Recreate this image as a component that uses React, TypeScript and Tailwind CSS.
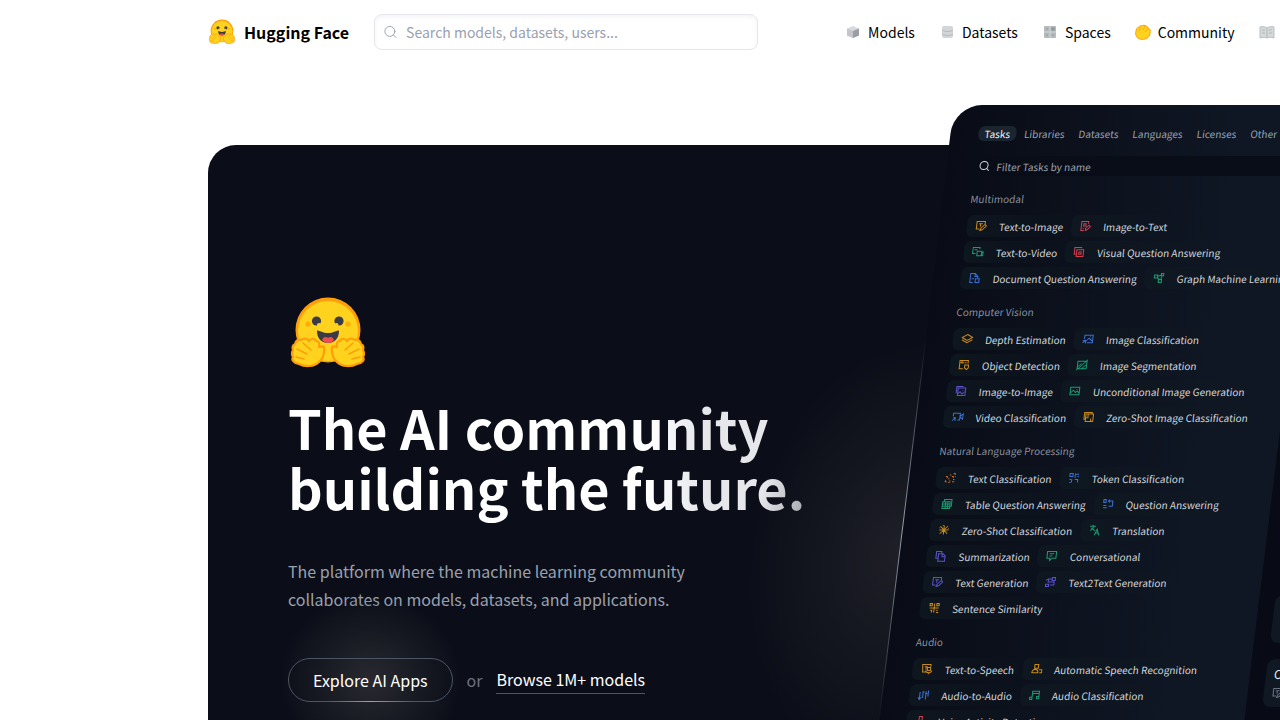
import type { ReactNode } from "react"
import { Search } from "lucide-react"

function HuggingFaceLogo({ className }: { className: string }) {
    return <svg className={className} viewBox="-3 0 80 72" fill="none" aria-hidden="true">
        <circle cx="37" cy="33" r="32.5" fill="#FF9D0B" />
        <circle cx="37" cy="34" r="30" fill="#FFD21E" />
        <circle cx="25.5" cy="24" r="4.6" fill="#3A3B45" />
        <circle cx="28" cy="28" r="2" fill="#FFD21E" />
        <circle cx="48" cy="24" r="4.6" fill="#3A3B45" />
        <circle cx="45.5" cy="28" r="2" fill="#FFD21E" />
        <circle cx="17" cy="27" r="2.6" fill="#FFAD03" />
        <circle cx="57" cy="27" r="2.6" fill="#FFAD03" />
        <path d="M26 34c0 8 5 12 11 12s11-4 11-12c0-2-5 2-11 2s-11-4-11-2Z" fill="#3A3B45" />
        <path d="M31 43c1-3 4-4 6-2 2-2 5-1 6 2-2 2-3 3-6 3s-4-1-6-3Z" fill="#EF4E4E" />
        <g stroke="#FF9D0B" strokeWidth="2.2" strokeLinejoin="round" fill="#FFD21E">
            <path d="M10 43c3-2 6-2 8 1 2-3 6-3 7 0 3 0 4 3 3 6 1 1 3-2 5 0 1 5-1 12-5 15-5 5-14 5-20 2-5-1-8-4-6-7-2-3-1-5 0-7-1-3 0-5 2-6 1-3 3-5 6-4Z" />
            <path d="M64 43c-3-2-6-2-8 1-2-3-6-3-7 0-3 0-4 3-3 6-1 1-3-2-5 0-1 5 1 12 5 15 5 5 14 5 20 2 5-1 8-4 6-7 2-3 1-5 0-7 1-3 0-5-2-6-1-3-3-5-6-4Z" />
            <path d="M12 46l8 7M6 52l10 5M5 60l8 2M62 46l-8 7M68 52l-10 5M69 60l-8 2" strokeWidth="1.5" strokeLinecap="round" />
        </g>
    </svg>
}

const navItems: { label: string; icon: ReactNode }[] = [
    { label: "Models", icon: <><path d="M8 2 14 4.5v7L8 14l-6-2.5v-7Z" fill="#d9dade" /><path d="M14 4.5v7L8 14V7Z" fill="#9c9ea6" /><path d="M2 4.5v7L8 14V7Z" fill="#c3c5cb" /></> },
    { label: "Datasets", icon: <><rect x="3" y="2" width="11" height="12" rx="2" fill="#d3d6d8" /><path d="M3 6c3 2 8 2 11 0M3 10c3 2 8 2 11 0" stroke="#b4b9bb" /></> },
    { label: "Spaces", icon: <><rect x="2" y="2" width="12" height="12" rx="1" fill="#b4babd" /><path d="M8 2v12M2 8h12" stroke="#dde0e1" strokeWidth=".7" /><circle cx="11" cy="5" r="2" fill="#929b9f" /><path d="M4 4h2v2H4ZM4 10h2v2H4ZM10 10h2v2h-2Z" fill="#a3abae" /></> },
    { label: "Community", icon: <><path d="M1 11c-1-2 0-3 0-4s1-4 3-4c1-1 2-2 3-1 1-1 3-1 4 0 1 0 2 1 2 2 2 1 3 3 2 5 0 3-2 5-5 6-4 1-8 0-9-4Z" fill="#FFD21E" stroke="#FF9D0B" /><path d="m4 7 2-4M8 6l2-4M10 8l3-4" stroke="#FF9D0B" strokeWidth=".8" /></> },
    { label: "Docs", icon: <><path d="M1 3c3-1 5 0 7 1 2-1 4-2 7-1v11c-3-1-5-1-7 0-2-1-4-1-7 0Z" fill="#d5d9da" stroke="#b9bfc1" /><path d="M8 4v10M3 6h3M3 9h3M10 6h3M10 9h3" stroke="#b0b6b8" /></> },
]

// Line drawings of the task icons, on a 16 x 16 grid
const shapes: Record<string, string> = {
    write: "M13 6V2H2v10h4M5 5h5M7 5v4M7 14l1-3 5-5 2 2-5 5Z",
    imageText: "M12 5V2H3v12h4M6 5h3v3H6ZM9 14v-3l4-4 2 2-4 4ZM5 11h2",
    video: "M10 4V2H1v8h4M3 5h4M7 7h6v6H7ZM13 9l2-1v5l-2-1",
    visual: "M11 3V2H2v9h2M5 5h9v9H5ZM8 8h3v3H8Z",
    doc: "M6 14H2V2h6l4 4v2M8 2v4h4M4 9h3M9 9h5v5H9Z",
    graph: "M2 4h4v4H2ZM11 2h3v3h-3ZM8 10h4v4H8ZM6 6l5-2M6 8l3 2M12 5l-1 5",
    layers: "M8 2 15 6 8 10 1 6ZM1 9l7 4 7-4",
    image: "M2 3h12v10H2ZM2 11l4-4 3 3 2-2 3 3M10 6h1",
    classify: "M7 13h7V3H3v5M6 10l3-3 5 4M10 5h1M1 13l4-3M1 10h4v4",
    detect: "M7 13H2V2h11v4M3 5h5M5 2v4M9 8h5v4l-2 2-3-2ZM9 5h2",
    segment: "M2 3h12v10H2ZM1 15 15 1M3 10l4-4M8 13l5-5",
    images: "M4 4h10v10H4ZM2 11V2h9M4 12l3-3 3 3 3-3M10 7h1",
    videoClass: "M2 7V3h9v9H8M11 7l4-3v7l-4-3M1 13l4-4M2 9h3v4",
    zeroImage: "M12 4V2H2v9h3M4 4h10v10H4ZM7 4v4M11 14v-4M4 9h4",
    dots: "M2 6h2v2M7 4h2M12 2h2v2M10 6h2v2M5 9h2M2 11v2h2M7 12h2M12 10h2M14 6h1M6 14h2M11 13h3",
    token: "M2 2h4v4H2ZM10 3h4M12 6h2M9 2v4M2 10h2M5 9v5M9 10h4v4M2 14h2M8 7h2",
    table: "M2 5h10v9H2ZM4 5V2h10v9h-2M2 8h10M2 11h10M6 5v9M9 5v9",
    question: "M2 2h3v4H2ZM2 10h4M2 13h5M9 4h5v7H9M10 2 8 4l2 2",
    zero: "M8 2v12M2 8h12M3 3l10 10M3 13 13 3M6 2h1M14 6v1M2 5h1",
    translate: "M1 3h8M5 1v2M2 9l5-6M3 5l5 4M8 15l3-8 3 8M9 12h4",
    copy: "M4 11H2V2h7v2M5 5h6l3 3v7H5ZM10 5v4h4",
    chat: "M2 2h12v9H9l-3 3v-3H2ZM5 5h6M5 8h4",
    path: "M2 11h4v3H2ZM10 2h4v4h-4ZM10 4H5v4h8v4H8M2 6l2-2",
    similar: "M2 2h3v3H2ZM8 2v12M2 8h12M11 2h3v3h-3ZM3 11h2v3M11 11h2M14 14h-3",
    speech: "M9 12H3L2 2h11v3M5 5h4M7 5v4M9 6h4v4H9ZM7 10c0 4 8 4 8 0M11 13v2",
    person: "M5 2h5v5H5ZM2 13c0-6 8-6 8 0ZM11 9h4v4h-3",
    sliders: "M3 4v10M1 11l2 3 2-3M7 3v9M6 4h3M11 3v11M10 6h3M14 2v8",
    music: "M5 12V3h9v8M5 6h9M2 11h3v3H2ZM11 10h3v3h-3Z",
    mic: "M6 2h4v7H6ZM3 7c0 7 10 7 10 0M8 12v3",
}

function TaskIcon({ shape, className }: { shape: string; className: string }) {
    return <svg className={className} viewBox="0 0 16 16" fill="none" stroke="currentColor" strokeWidth="1.4" aria-hidden="true">
        <path d={shapes[shape]} />
    </svg>
}

type Task = [label: string, shape: string, color: string]

const amber = "text-[#c98a1b]"
const red = "text-[#cf3f50]"
const green = "text-[#1c9a74]"
const blue = "text-[#3c6fd1]"
const violet = "text-[#5b53c9]"

const sections: { title: string; rows: Task[][] }[] = [
    {
        title: "Multimodal",
        rows: [
            [["Text-to-Image", "write", amber], ["Image-to-Text", "imageText", red]],
            [["Text-to-Video", "video", green], ["Visual Question Answering", "visual", red]],
            [["Document Question Answering", "doc", blue], ["Graph Machine Learning", "graph", green]],
        ],
    },
    {
        title: "Computer Vision",
        rows: [
            [["Depth Estimation", "layers", amber], ["Image Classification", "classify", blue]],
            [["Object Detection", "detect", amber], ["Image Segmentation", "segment", green]],
            [["Image-to-Image", "images", violet], ["Unconditional Image Generation", "image", green]],
            [["Video Classification", "videoClass", blue], ["Zero-Shot Image Classification", "zeroImage", amber]],
        ],
    },
    {
        title: "Natural Language Processing",
        rows: [
            [["Text Classification", "dots", "text-[#c4692a]"], ["Token Classification", "token", blue]],
            [["Table Question Answering", "table", green], ["Question Answering", "question", blue]],
            [["Zero-Shot Classification", "zero", amber], ["Translation", "translate", green]],
            [["Summarization", "copy", violet], ["Conversational", "chat", green]],
            [["Text Generation", "write", violet], ["Text2Text Generation", "path", violet]],
            [["Sentence Similarity", "similar", amber]],
        ],
    },
    {
        title: "Audio",
        rows: [
            [["Text-to-Speech", "speech", amber], ["Automatic Speech Recognition", "person", amber]],
            [["Audio-to-Audio", "sliders", blue], ["Audio Classification", "music", green]],
            [["Voice Activity Detection", "mic", red]],
        ],
    },
]

const tabs = ["Libraries", "Datasets", "Languages", "Licenses", "Other"]

function Header() {
    return <header className="flex h-16 items-center pl-52">
        <a href="#" className="flex shrink-0 items-center gap-2 text-base font-bold">
            <HuggingFaceLogo className="h-7 w-7" />
            Hugging Face
        </a>
        <label className="ml-[25px] flex h-9 w-96 shrink-0 items-center gap-2 rounded-lg border border-gray-200 bg-white px-2 inset-shadow-sm inset-shadow-gray-100">
            <Search className="h-4 w-4 text-gray-400" strokeWidth={1.5} />
            <input type="text" aria-label="Search" placeholder="Search models, datasets, users..." className="w-full bg-transparent text-sm outline-none placeholder:text-gray-400" />
        </label>
        <nav className="ml-[87px] flex shrink-0 items-center gap-6">
            {navItems.map((item) => (
                <a key={item.label} href="#" className="flex items-center gap-[7px] text-sm">
                    <svg className="h-4 w-4" viewBox="0 0 16 16" fill="none" aria-hidden="true">{item.icon}</svg>
                    {item.label}
                </a>
            ))}
        </nav>
    </header>
}

function ModelCard({ name }: { name: string }) {
    return <a href="#" className="flex h-12 flex-col justify-center gap-1 rounded-lg bg-[#101923] px-2 whitespace-nowrap">
        <span className="text-xs text-gray-200">{name}</span>
        <span className="flex items-center gap-1 text-gray-500">
            <TaskIcon shape="write" className="h-3 w-3" />
            Text Generation
        </span>
    </a>
}

function TasksPanel() {
    return <div className="relative flex origin-top-left -skew-x-[7deg] text-[10px] text-gray-300">
        <div className="absolute top-[210px] right-full h-[430px] w-44 bg-[radial-gradient(150px_210px_at_100%_55%,#1e1f27,transparent)]" />
        <div className="absolute top-[230px] left-0 h-[390px] w-px bg-linear-to-b from-transparent via-gray-400 to-transparent" />
        <div className="w-[366px] shrink-0 rounded-tl-[28px] bg-linear-to-r from-[#090c16] to-[#0f1724] to-80% pt-[18px] pl-7">
            <div className="flex h-5 items-center gap-3.5 whitespace-nowrap text-gray-400">
                <button type="button" className="-mr-1.5 rounded-md bg-[#1b2530] px-1.5 text-gray-100">Tasks</button>
                {tabs.map((tab) => <button key={tab} type="button">{tab}</button>)}
            </div>
            <label className="mt-[13px] flex h-5 items-center gap-1.5 bg-[#090d17] pl-1">
                <Search className="h-3 w-3 text-gray-300" strokeWidth={2} />
                <input type="text" aria-label="Filter Tasks by name" placeholder="Filter Tasks by name" className="min-w-0 flex-1 bg-transparent outline-none placeholder:text-gray-400" />
            </label>
            {sections.map((section) => (
                <section key={section.title} className="pt-3">
                    <h2 className="flex h-5 items-center text-gray-400/90">{section.title}</h2>
                    <div className="mt-[7px] flex flex-col gap-1">
                        {section.rows.map((row) => (
                            <div key={row[0][0]} className="flex gap-1">
                                {row.map(([label, shape, color]) => (
                                    <a key={label} href="#" className="flex h-[22px] items-center gap-3 rounded-md bg-linear-to-r from-[#0f1820]/80 to-[#0f1820]/10 pr-1 pl-2 whitespace-nowrap">
                                        <TaskIcon shape={shape} className={`h-3 w-3 shrink-0 ${color}`} />
                                        {label}
                                    </a>
                                ))}
                            </div>
                        ))}
                    </div>
                </section>
            ))}
        </div>
        <div className="flex w-96 shrink-0 flex-col gap-4 bg-[#080b15] pt-[490px] pl-4">
            <ModelCard name="meta-llama/Llama-2-70b" />
            <ModelCard name="Open-Orca/OpenOrca-Platypus2-13B" />
        </div>
    </div>
}

function Hero() {
    return <main className="relative mt-[41px] overflow-hidden">
        <div className="mt-10 ml-52 flex h-160 flex-col rounded-tl-[28px] bg-[#0b0e18]">
            <div className="flex flex-col items-start pt-38 pl-20">
                <HuggingFaceLogo className="h-18 w-20" />
                <h1 className="mt-7 bg-linear-to-r from-white from-70% to-gray-200 to-80% bg-clip-text pb-2 text-[54px] leading-15 font-bold text-transparent">
                    The AI community<br />building the future.
                </h1>
                <p className="mt-8 text-base leading-7 text-gray-400">
                    The platform where the machine learning community<br />
                    collaborates on models, datasets, and applications.
                </p>
                <div className="mt-[45px] flex items-center text-base text-white">
                    <div className="relative">
                        <div className="absolute -inset-x-2 -inset-y-16 bg-[radial-gradient(closest-side,#282930,transparent)]" />
                        <button type="button" className="relative h-11 rounded-full border border-gray-600 px-6">Explore AI Apps</button>
                        <div className="absolute inset-x-10 bottom-0 h-px bg-linear-to-r from-transparent via-gray-400 to-transparent" />
                    </div>
                    <span className="mx-3.5 text-gray-500">or</span>
                    <a href="#" className="border-b border-gray-600 pb-0.5">Browse 1M+ models</a>
                </div>
            </div>
        </div>
        <div className="absolute top-0 left-[954px]">
            <TasksPanel />
        </div>
    </main>
}

export default function App() {
    return <div className="h-screen overflow-hidden bg-white font-['Noto_Sans_CJK_SC',sans-serif] text-black">
        <Header />
        <Hero />
    </div>
}
